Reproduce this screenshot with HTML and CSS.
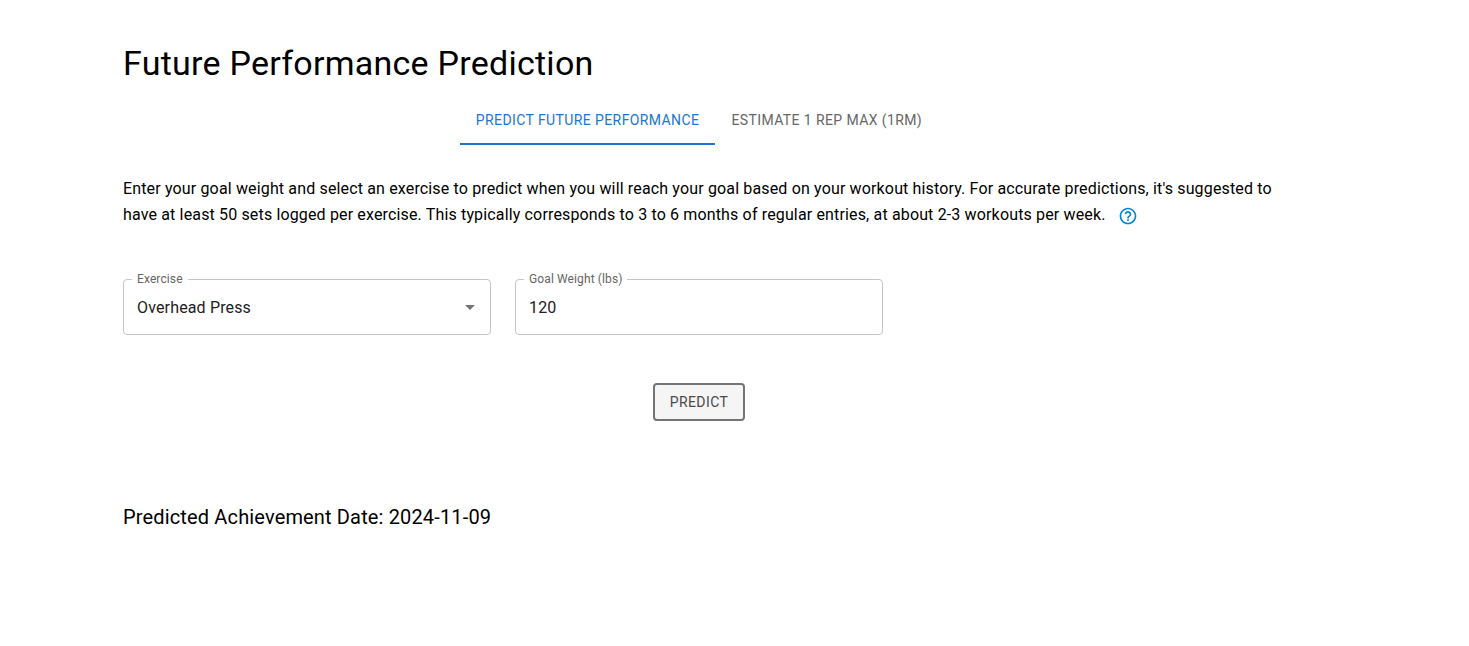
FILE: index.html
```html
<!DOCTYPE html>
<html lang="en">
<head>
<meta charset="utf-8">
<meta name="viewport" content="width=device-width, initial-scale=1">
<title>Future Performance Prediction</title>
<link rel="stylesheet" href="styles.css">
</head>
<body>
<main class="container">
  <h1 class="title">Future Performance Prediction</h1>
  <div class="tabs" role="tablist">
    <button class="tab tab-selected" type="button" role="tab" aria-selected="true">Predict Future Performance</button>
    <button class="tab" type="button" role="tab" aria-selected="false">Estimate 1 Rep Max (1RM)</button>
  </div>
  <p class="intro">Enter your goal weight and select an exercise to predict when you will reach your goal based on your workout history. For accurate predictions, it's suggested to have at least 50 sets logged per exercise. This typically corresponds to 3 to 6 months of regular entries, at about 2-3 workouts per week.
    <button class="help" type="button" aria-label="More information"><svg class="help-icon" viewBox="0 0 24 24" aria-hidden="true"><path d="M11 18h2v-2h-2v2zm1-16C6.48 2 2 6.48 2 12s4.48 10 10 10 10-4.48 10-10S17.520 2 12 2zm0 18c-4.410 0-8-3.590-8-8s3.590-8 8-8 8 3.590 8 8-3.590 8-8 8zm0-14c-2.210 0-4 1.790-4 4h2c0-1.100.9-2 2-2s2 .9 2 2c0 2-3 1.750-3 5h2c0-2.250 3-2.500 3-5 0-2.210-1.790-4-4-4z"/></svg></button></p>
  <form class="form">
    <div class="fields">
      <div class="field">
        <label class="field-label" for="exercise">Exercise</label>
        <select class="control select" id="exercise">
          <option>Overhead Press</option>
        </select>
        <svg class="arrow" viewBox="0 0 24 24" aria-hidden="true"><path d="M7 10l5 5 5-5z"/></svg>
      </div>
      <div class="field">
        <label class="field-label" for="goal">Goal Weight (lbs)</label>
        <input class="control" id="goal" type="text" inputmode="numeric" value="120">
      </div>
    </div>
    <button class="predict" type="button">Predict</button>
  </form>
  <h2 class="result">Predicted Achievement Date: 2024-11-09</h2>
</main>
</body>
</html>
```

FILE: styles.css
```css
* {
  box-sizing: border-box;
}

body {
  margin: 0;
  padding-right: 71px;
  background: #fff;
  color: #000;
  font-family: Roboto, "Liberation Sans", sans-serif;
  font-size: 16px;
}

button,
input,
select {
  font: inherit;
  letter-spacing: inherit;
}

.container {
  max-width: 1200px;
  margin: 0 auto;
  padding: 42px 24px;
}

.title {
  margin: 0 0 13px;
  font-size: 34px;
  font-weight: 400;
  line-height: 42px;
  letter-spacing: 0.00735em;
}

.tabs {
  display: flex;
  justify-content: center;
}

.tab {
  height: 48px;
  padding: 0 16px;
  border: 0;
  border-bottom: 2px solid transparent;
  background: none;
  color: #666;
  font-size: 14px;
  letter-spacing: 0.02857em;
  text-transform: uppercase;
  cursor: pointer;
}

.tab-selected {
  border-bottom-color: #1976d2;
  color: #1976d2;
}

.intro {
  margin: 31px 0 0;
  line-height: 26px;
  letter-spacing: 0.00938em;
}

.help {
  height: 20px;
  margin-left: 8px;
  padding: 0;
  border: 0;
  background: none;
  color: #0288d1;
  vertical-align: middle;
  cursor: pointer;
}

.help-icon {
  display: block;
  width: 20px;
  height: 20px;
  fill: currentColor;
}

.form {
  display: flex;
  flex-direction: column;
  align-items: center;
  gap: 48px;
  margin-top: 51px;
}

.fields {
  display: grid;
  grid-template-columns: repeat(3, 1fr);
  gap: 24px;
  width: 100%;
}

.field {
  position: relative;
}

.field-label {
  position: absolute;
  top: -8px;
  left: 9px;
  padding: 0 5px;
  background: #fff;
  color: #666;
  font-size: 12px;
  line-height: 16px;
  letter-spacing: 0.00938em;
}

.control {
  display: block;
  width: 100%;
  height: 56px;
  padding: 0 13px;
  border: 1px solid #c4c4c4;
  border-radius: 4px;
  background: #fff;
  color: #212121;
  letter-spacing: 0.00938em;
}

.select {
  appearance: none;
}

.arrow {
  position: absolute;
  top: 16px;
  right: 9px;
  width: 24px;
  height: 24px;
  fill: #757575;
  pointer-events: none;
}

.predict {
  height: 38px;
  padding: 0 15px;
  border: 2px solid #757575;
  border-radius: 4px;
  background: #f5f5f5;
  color: #4a4a4a;
  font-size: 14px;
  letter-spacing: 0.02857em;
  text-transform: uppercase;
  cursor: pointer;
}

.result {
  margin: 80px 0 0;
  font-size: 20px;
  font-weight: 400;
  line-height: 32px;
  letter-spacing: 0.0075em;
}
```
